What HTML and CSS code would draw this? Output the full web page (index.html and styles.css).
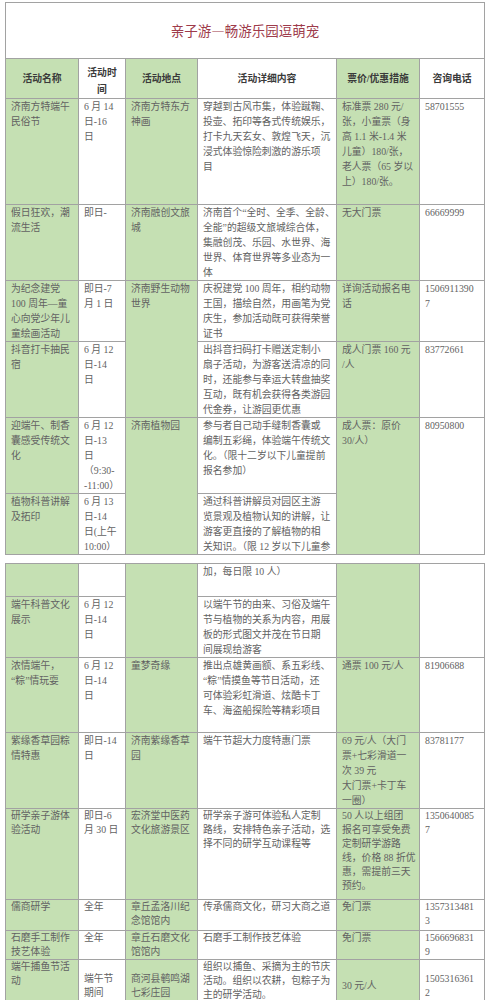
FILE: index.html
```html
<!DOCTYPE html>
<html lang="zh-CN">
<head>
<meta charset="utf-8">
<title>亲子游—畅游乐园逗萌宠</title>
<link rel="stylesheet" href="styles.css">
</head>
<body>
<div class="doc">
  <table class="sheet sheet-top">
    <colgroup>
      <col class="c1 g"><col class="c2"><col class="c3 g"><col class="c4"><col class="c5 g"><col class="c6">
    </colgroup>
    <tr class="title-row"><td colspan="6" class="title">亲子游—畅游乐园逗萌宠</td></tr>
    <tr class="head">
      <th>活动名称</th><th class="wrap-head">活动时<br>间</th><th>活动地点</th><th>活动详细内容</th><th>票价/优惠措施</th><th>咨询电话</th>
    </tr>
    <tr class="r1">
      <td>济南方特端午<br>民俗节</td>
      <td>6 月 14<br>日-16<br>日</td>
      <td>济南方特东方<br>神画</td>
      <td>穿越到古风市集，体验蹴鞠、<br>投壶、拓印等各式传统娱乐，<br>打卡九天玄女、敦煌飞天，沉<br>浸式体验惊险刺激的游乐项<br>目</td>
      <td>标准票 280 元/<br>张，小童票（身<br>高 1.1 米-1.4 米<br>儿童）180/张，<br>老人票（65 岁以<br>上）180/张。</td>
      <td>58701555</td>
    </tr>
    <tr class="r2">
      <td>假日狂欢，潮<br>流生活</td>
      <td>即日-</td>
      <td>济南融创文旅<br>城</td>
      <td>济南首个“全时、全季、全龄、<br>全能”的超级文旅城综合体，<br>集融创茂、乐园、水世界、海<br>世界、体育世界等多业态为一<br>体</td>
      <td>无大门票</td>
      <td>66669999</td>
    </tr>
    <tr class="r3">
      <td>为纪念建党<br>100 周年—童<br>心向党少年儿<br>童绘画活动</td>
      <td>即日-7<br>月 1 日</td>
      <td rowspan="2">济南野生动物<br>世界</td>
      <td>庆祝建党 100 周年，相约动物<br>王国，描绘自然，用画笔为党<br>庆生，参加活动既可获得荣誉<br>证书</td>
      <td>详询活动报名电<br>话</td>
      <td>1506911390<br>7</td>
    </tr>
    <tr class="r4">
      <td>抖音打卡抽民<br>宿</td>
      <td>6 月 12<br>日-14<br>日</td>
      <td>出抖音扫码打卡赠送定制小<br>扇子活动，为游客送清凉的同<br>时，还能参与幸运大转盘抽奖<br>互动，既有机会获得各类游园<br>代金券，让游园更优惠</td>
      <td>成人门票 160 元<br>/人</td>
      <td>83772661</td>
    </tr>
    <tr class="r5">
      <td>迎端午、制香<br>囊感受传统文<br>化</td>
      <td>6 月 12<br>日-13<br>日<br>（9:30-<br>-11:00）</td>
      <td rowspan="2">济南植物园</td>
      <td>参与者自己动手缝制香囊或<br>编制五彩绳，体验端午传统文<br>化。（限十二岁以下儿童提前<br>报名参加）</td>
      <td rowspan="2">成人票：原价<br>30/人）</td>
      <td rowspan="2">80950800</td>
    </tr>
    <tr class="r6">
      <td>植物科普讲解<br>及拓印</td>
      <td>6 月 13<br>日-14<br>日(上午<br>10:00）</td>
      <td>通过科普讲解员对园区主游<br>览景观及植物认知的讲解，让<br>游客更直接的了解植物的相<br>关知识。（限 12 岁以下儿童参</td>
    </tr>
  </table>

  <table class="sheet sheet-bottom">
    <colgroup>
      <col class="c1 g"><col class="c2"><col class="c3 g"><col class="c4"><col class="c5 g"><col class="c6">
    </colgroup>
    <tr class="r6c">
      <td></td>
      <td></td>
      <td rowspan="2"></td>
      <td>加，每日限 10 人）</td>
      <td rowspan="2"></td>
      <td rowspan="2"></td>
    </tr>
    <tr class="r7">
      <td>端午科普文化<br>展示</td>
      <td>6 月 12<br>日-14<br>日</td>
      <td>以端午节的由来、习俗及端午<br>节与植物的关系为内容，用展<br>板的形式图文并茂在节日期<br>间展现给游客</td>
    </tr>
    <tr class="r8">
      <td>浓情端午，<br>“粽”情玩耍</td>
      <td>6 月 12<br>日-14<br>日</td>
      <td>童梦奇缘</td>
      <td>推出点雄黄画额、系五彩线、<br>“粽”情摸鱼等节日活动，还<br>可体验彩虹滑道、炫酷卡丁<br>车、海盗船探险等精彩项目</td>
      <td>通票 100 元/人</td>
      <td>81906688</td>
    </tr>
    <tr class="r9">
      <td>紫缘香草园粽<br>情特惠</td>
      <td>即日-14<br>日</td>
      <td>济南紫缘香草<br>园</td>
      <td>端午节超大力度特惠门票</td>
      <td>69 元/人（大门<br>票+七彩滑道一<br>次 39 元<br>大门票+卡丁车<br>一圈）</td>
      <td>83781177</td>
    </tr>
    <tr class="r10 tight">
      <td>研学亲子游体<br>验活动</td>
      <td>即日-6<br>月 30 日</td>
      <td>宏济堂中医药<br>文化旅游景区</td>
      <td>研学亲子游可体验私人定制<br>路线，安排特色亲子活动，选<br>择不同的研学互动课程等</td>
      <td>50 人以上组团<br>报名可享受免费<br>定制研学游路<br>线，价格 88 折优<br>惠，需提前三天<br>预约。</td>
      <td>1350640085<br>7</td>
    </tr>
    <tr class="r11 tight">
      <td>儒商研学</td>
      <td>全年</td>
      <td>章丘孟洛川纪<br>念馆馆内</td>
      <td>传承儒商文化，研习大商之道</td>
      <td>免门票</td>
      <td>1357313481<br>3</td>
    </tr>
    <tr class="r12 tight">
      <td>石磨手工制作<br>技艺体验</td>
      <td>全年</td>
      <td>章丘石磨文化<br>馆馆内</td>
      <td>石磨手工制作技艺体验</td>
      <td>免门票</td>
      <td>1566696831<br>9</td>
    </tr>
    <tr class="r13 tight">
      <td>端午捕鱼节活<br>动</td>
      <td class="mid">端午节<br>期间</td>
      <td class="mid">商河县鹌鸣湖<br>七彩庄园</td>
      <td>组织以捕鱼、采摘为主的节庆<br>活动。组织以农耕，包粽子为<br>主的研学活动。</td>
      <td class="mid">30 元/人</td>
      <td class="mid">1505316361<br>2</td>
    </tr>
  </table>
</div>
</body>
</html>
```

FILE: styles.css
```css
html, body {
  background: #ffffff;
}

body {
  margin: 2px 0 0 5px;
  font-family: "Liberation Serif", "Noto Sans CJK SC", serif;
  font-size: 9.8px;
  color: #626262;
  overflow: hidden;
}

.doc {
  width: 479px;
}

.sheet {
  border-collapse: collapse;
  table-layout: fixed;
  width: 479px;
}

.sheet-bottom {
  margin-top: 8px;
}

.c1 { width: 73px; }
.c2 { width: 47px; }
.c3 { width: 72px; }
.c4 { width: 139px; }
.c5 { width: 83px; }
.c6 { width: 65px; }

col.g {
  background: #c5e0b3;
}

.sheet td,
.sheet th {
  border: 1px solid #a2a2a2;
  padding: 0 1px 0 5px;
  vertical-align: top;
  text-align: left;
  line-height: 15px;
  white-space: nowrap;
  overflow: hidden;
  font-weight: normal;
}

.sheet .title {
  background: #ffffff;
  text-align: center;
  vertical-align: middle;
  font-family: "Noto Sans CJK SC", sans-serif;
  font-size: 13.5px;
  font-weight: normal;
  color: #9e3b4b;
  padding: 0;
}

.title-row { height: 56px; }

.head { height: 39px; }

.head th {
  text-align: center;
  vertical-align: middle;
  font-weight: bold;
  color: #3a3a3a;
  padding: 0 2px;
  line-height: 17px;
}

.head th.wrap-head {
  padding-top: 5px;
}

.r1 { height: 106px; }
.r2 { height: 74px; }
.r3 { height: 61px; }
.r4 { height: 75px; }
.r5 { height: 75px; }
.r6 { height: 61px; }
.r6c { height: 33px; }
.r7 { height: 61px; }
.r8 { height: 75px; }
.r9 { height: 75px; }
.r10 { height: 91px; }
.r11 { height: 31px; }
.r12 { height: 29px; }
.r13 { height: 52px; }

.tight td {
  line-height: 14px;
}

.sheet td.mid {
  vertical-align: middle;
}
```
